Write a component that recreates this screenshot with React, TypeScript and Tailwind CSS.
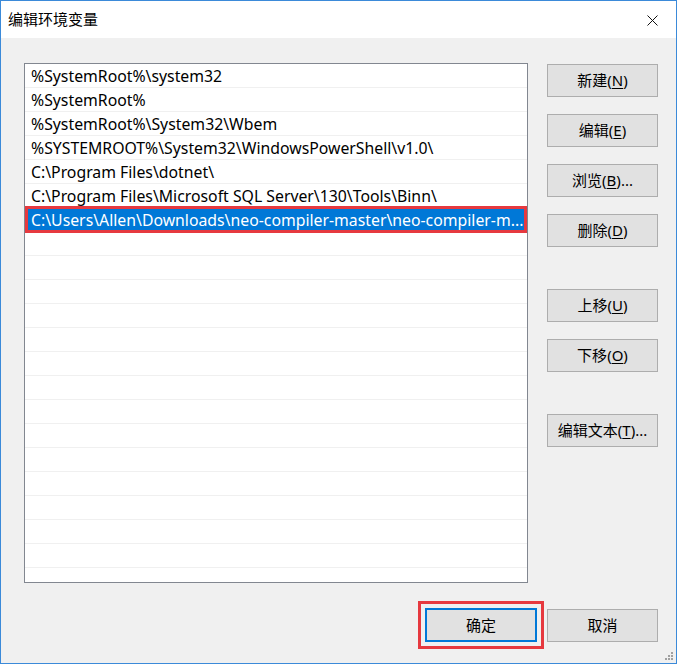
import React from 'react';

const font = "font-['Noto_Sans','Noto_Sans_CJK_SC',sans-serif]";

const paths = [
  '%SystemRoot%\\system32',
  '%SystemRoot%',
  '%SystemRoot%\\System32\\Wbem',
  '%SYSTEMROOT%\\System32\\WindowsPowerShell\\v1.0\\',
  'C:\\Program Files\\dotnet\\',
  'C:\\Program Files\\Microsoft SQL Server\\130\\Tools\\Binn\\',
  'C:\\Users\\Allen\\Downloads\\neo-compiler-master\\neo-compiler-m...',
];

const SELECTED = 6;

const Btn: React.FC<{ label: string; hot: string; tail?: string; className?: string }> = ({ label, hot, tail = '', className = '' }) => (
  <button className={`w-[111px] h-[33px] bg-[#e1e1e1] border border-[#adadad] text-[15px] text-black flex items-center justify-center ${className}`}>
    {label}(<span className="underline underline-offset-2">{hot}</span>){tail}
  </button>
);

export default function App() {
  const rows = Array.from({ length: 22 }, (_, i) => paths[i] ?? '');

  return (
    <div className={`relative w-[677px] h-[664px] border border-[#3b8ad9] flex flex-col bg-[#f0f0f0] ${font}`}>
      {/* title bar */}
      <div className="h-[37px] bg-white flex items-center justify-between pl-[7px] pr-[18px] shrink-0">
        <span className="text-[15px] text-black">编辑环境变量</span>
        <svg width="11" height="11" viewBox="0 0 11 11" className="mt-[1px]">
          <path d="M0.5 0.5L10.5 10.5M10.5 0.5L0.5 10.5" stroke="#111" strokeWidth="1" />
        </svg>
      </div>

      <div className="flex-1 flex flex-col pl-[23px] pr-[18px] pt-[25px]">
        <div className="flex gap-[19px]">
          {/* list */}
          <div className="w-[504px] h-[520px] border border-[#828790] bg-white overflow-hidden">
            {rows.map((text, i) => (
              <div
                key={i}
                className={`relative h-[24px] flex items-center pl-[6px] pr-[4px] pt-[3px] text-[15.8px] whitespace-nowrap border-b ${
                  i === SELECTED ? 'bg-[#0078d7] text-white border-[#0078d7]' : 'text-black border-[#f0f0f0]'
                }`}
              >
                <span>{text}</span>
                {i === SELECTED && (
                  <span className="absolute left-0 right-0 -top-[2px] -bottom-[2px] border-[3px] border-[#e6393f] pointer-events-none" />
                )}
              </div>
            ))}
          </div>

          {/* side buttons */}
          <div className="flex flex-col mt-[1px]">
            <Btn label="新建" hot="N" />
            <Btn label="编辑" hot="E" className="mt-[17px]" />
            <Btn label="浏览" hot="B" tail="..." className="mt-[17px]" />
            <Btn label="删除" hot="D" className="mt-[17px]" />
            <Btn label="上移" hot="U" className="mt-[42px]" />
            <Btn label="下移" hot="O" className="mt-[17px]" />
            <Btn label="编辑文本" hot="T" tail="..." className="mt-[42px]" />
          </div>
        </div>

        {/* bottom buttons */}
        <div className="flex justify-end gap-[10px] mt-[25px]">
          <button className="w-[112px] h-[34px] bg-[#e1e1e1] border-2 border-[#0078d7] text-[15px] text-black outline-3 outline-offset-[4px] outline-[#e6393f]">
            确定
          </button>
          <button className="w-[111px] h-[33px] mt-[1px] bg-[#e1e1e1] border border-[#adadad] text-[15px] text-black">
            取消
          </button>
        </div>
      </div>

      {/* resize grip */}
      <svg width="10" height="10" viewBox="0 0 10 10" className="absolute right-[2px] bottom-[2px]">
        {[
          [8, 2], [8, 5], [5, 5], [8, 8], [5, 8], [2, 8],
        ].map(([x, y], k) => (
          <rect key={k} x={x - 1} y={y - 1} width="2" height="2" fill="#a0a0a0" />
        ))}
      </svg>
    </div>
  );
}
